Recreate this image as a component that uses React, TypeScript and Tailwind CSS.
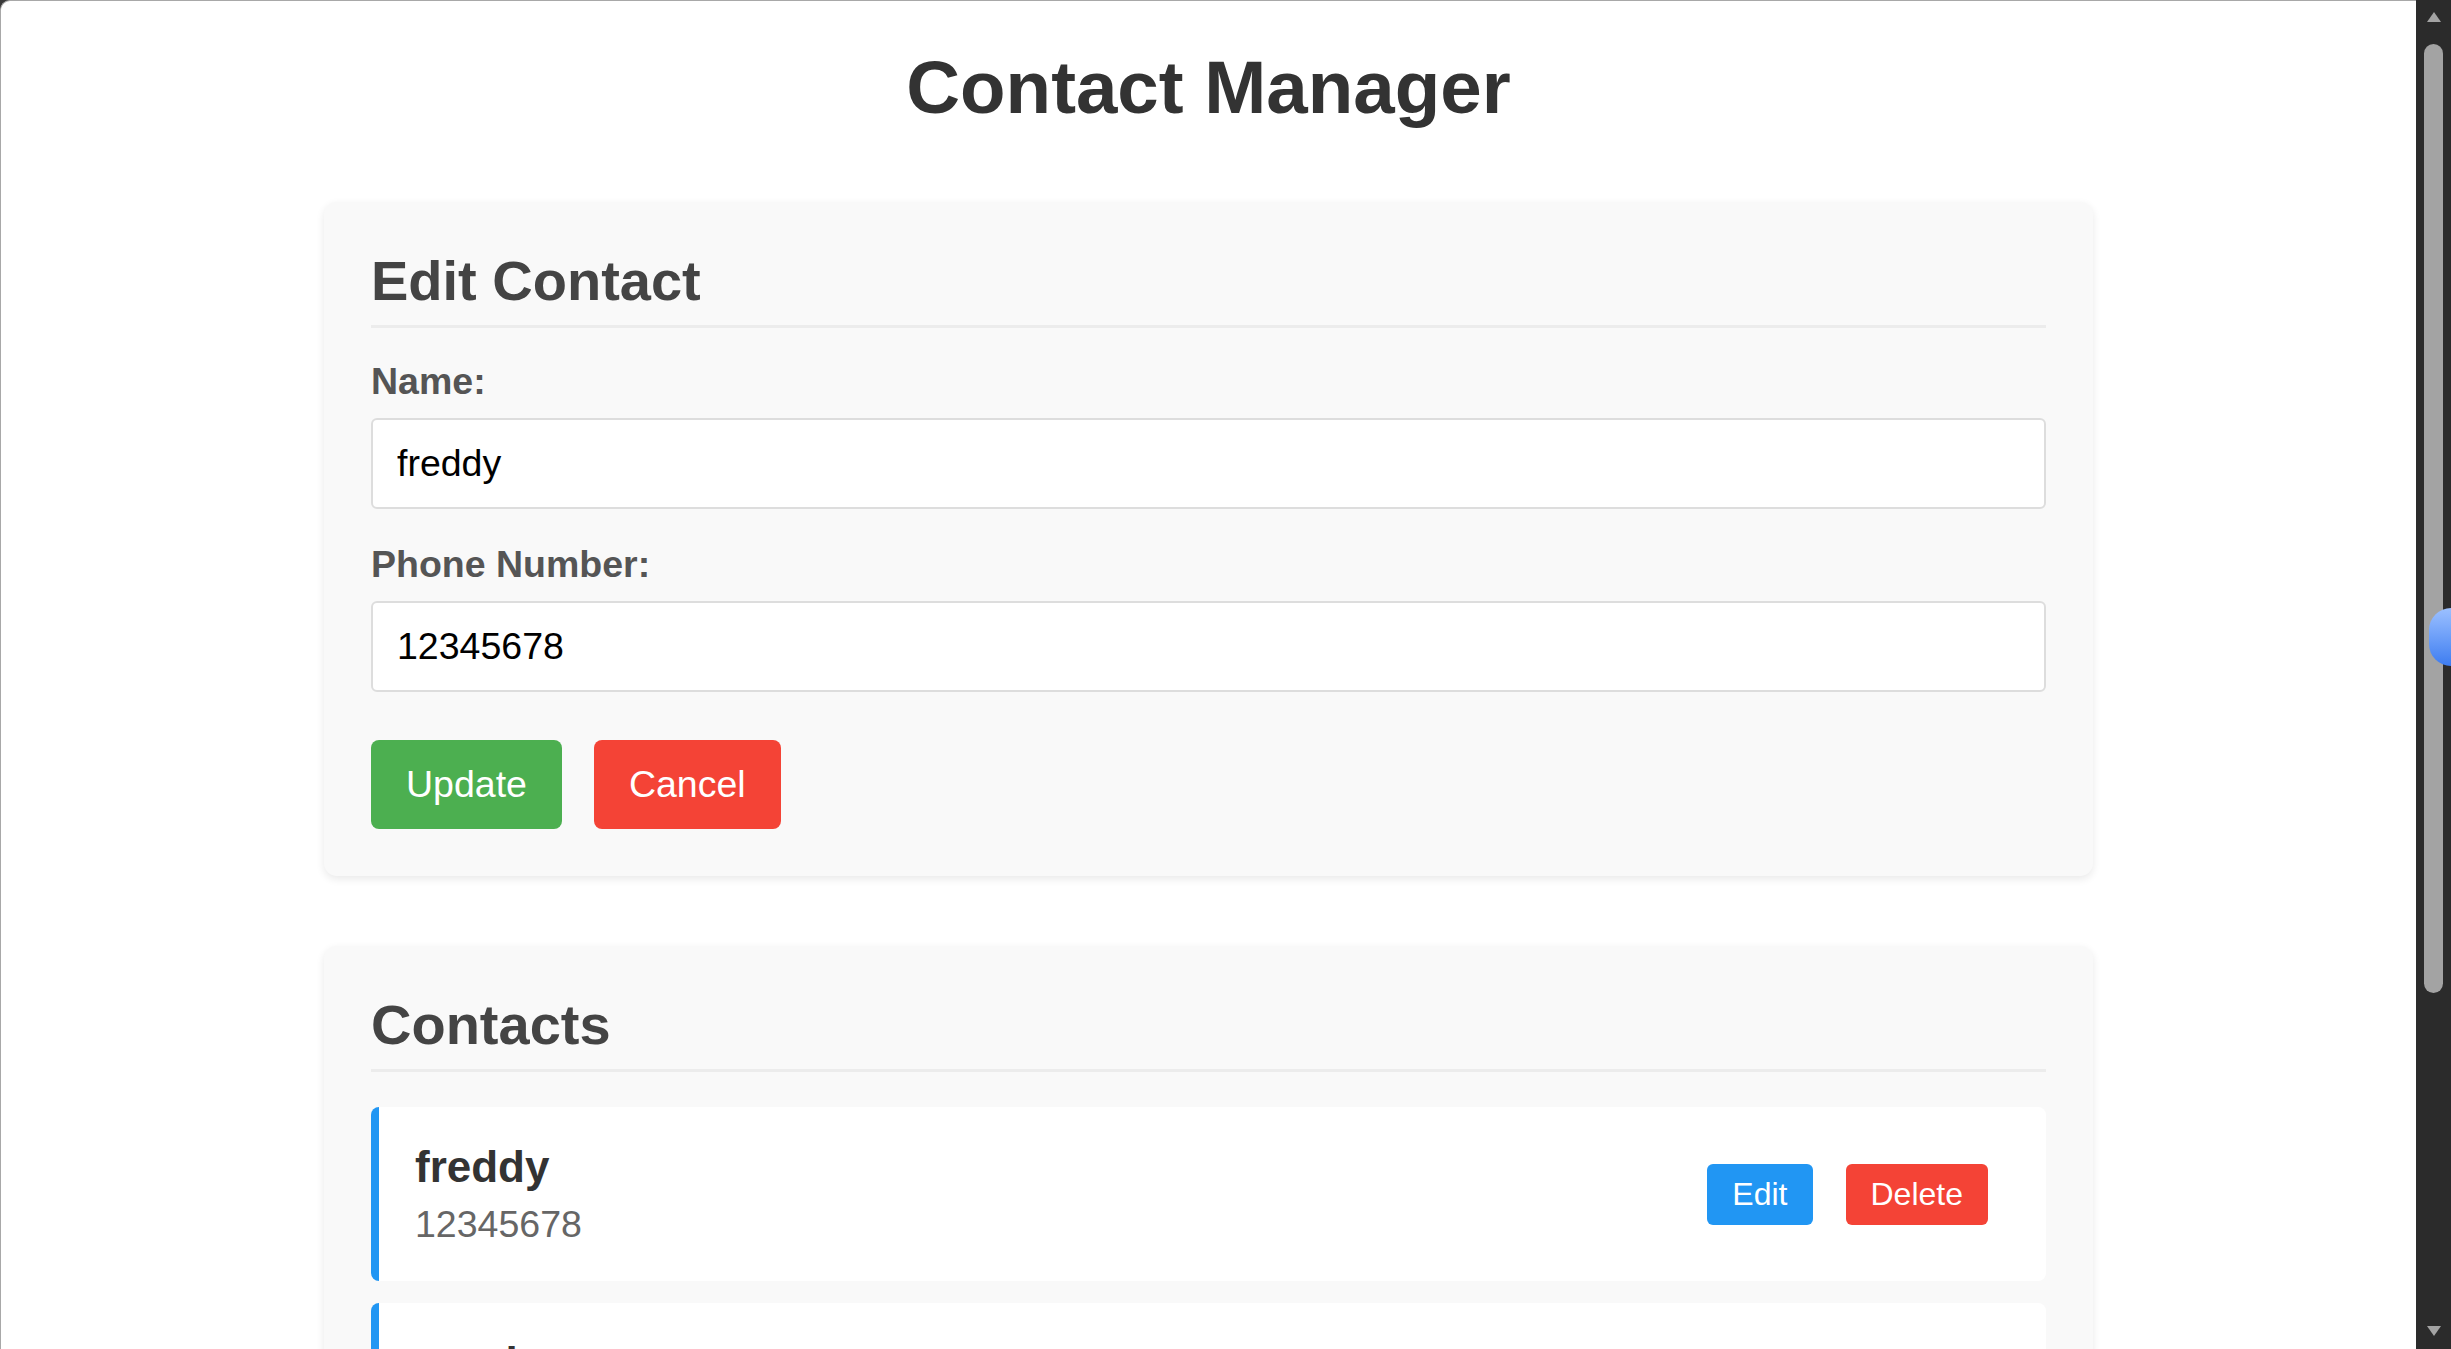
import React from 'react';

interface Contact {
    id: number;
    name: string;
    phone: string;
}

const contacts: Contact[] = [
    { id: 1, name: 'freddy', phone: '12345678' },
    { id: 2, name: 'sarah', phone: '87654321' },
];

function ContactRow({ contact }: { contact: Contact }) {
    return (
        <div className="flex items-center justify-between bg-white rounded-[8px] border-l-[8px] border-[#2196F3] py-[35px] pl-[36px] pr-[58px]">
            <div>
                <div className="text-[44px] leading-[50px] font-bold text-[#333]">{contact.name}</div>
                <div className="mt-[11px] text-[37.5px] leading-[43px] text-[#666]">{contact.phone}</div>
            </div>
            <div className="flex gap-[33px]">
                <button className="h-[61px] px-[25px] rounded-[6px] bg-[#2196F3] text-white text-[32px]">Edit</button>
                <button className="h-[61px] px-[25px] rounded-[6px] bg-[#f44336] text-white text-[32px]">Delete</button>
            </div>
        </div>
    );
}

export default function App() {
    return (
        <div className="flex h-screen overflow-hidden bg-[#3a3a3a] font-['Liberation_Sans',Arial,sans-serif]">
            <div className="flex-1 bg-white border-t border-l border-[#a8a8a8] rounded-tl-[10px] overflow-hidden">
                <h1 className="pt-[44px] text-center text-[74.5px] leading-[86px] font-bold text-[#333]">Contact Manager</h1>

                {/* edit form */}
                <div className="w-[1769px] mx-auto mt-[71px] p-[47px] bg-[#f9f9f9] rounded-[13px] shadow-[0_3px_9px_rgba(0,0,0,0.09)]">
                    <h2 className="text-[56px] leading-[64px] font-bold text-[#444] pb-[12px] border-b-[3px] border-[#ececec]">Edit Contact</h2>

                    <label className="block mt-[32px] mb-[15px] text-[37.5px] leading-[43px] font-bold text-[#555]">Name:</label>
                    <input
                        readOnly
                        value="freddy"
                        className="block w-full h-[91px] px-[24px] bg-white border-2 border-[#ddd] rounded-[6px] text-[37.5px] text-black outline-none"
                    />

                    <label className="block mt-[34px] mb-[15px] text-[37.5px] leading-[43px] font-bold text-[#555]">Phone Number:</label>
                    <input
                        readOnly
                        value="12345678"
                        className="block w-full h-[91px] px-[24px] bg-white border-2 border-[#ddd] rounded-[6px] text-[37.5px] text-black outline-none"
                    />

                    <div className="flex gap-[32px] mt-[48px]">
                        <button className="h-[89px] px-[35px] rounded-[8px] bg-[#4CAF50] text-white text-[37.5px]">Update</button>
                        <button className="h-[89px] px-[35px] rounded-[8px] bg-[#f44336] text-white text-[37.5px]">Cancel</button>
                    </div>
                </div>

                {/* contact list */}
                <div className="w-[1769px] mx-auto mt-[70px] p-[47px] bg-[#f9f9f9] rounded-[13px] shadow-[0_3px_9px_rgba(0,0,0,0.09)]">
                    <h2 className="text-[56px] leading-[64px] font-bold text-[#444] pb-[12px] border-b-[3px] border-[#ececec]">Contacts</h2>
                    <div className="flex flex-col gap-[22px] mt-[35px]">
                        {contacts.map(c => (
                            <ContactRow key={c.id} contact={c} />
                        ))}
                    </div>
                </div>
            </div>

            {/* scrollbar */}
            <div className="relative w-[35px] bg-[#2b2b2b] flex flex-col items-center">
                <svg width="16" height="12" viewBox="0 0 16 12" className="mt-[11px]">
                    <path d="M8 1 L15 11 L1 11 Z" fill="#a3a3a3" />
                </svg>
                <div className="mt-[21px] w-[19px] h-[949px] rounded-full bg-[#a3a3a3]" />
                <div className="flex-1" />
                <svg width="16" height="12" viewBox="0 0 16 12" className="mb-[12px]">
                    <path d="M1 1 L15 1 L8 11 Z" fill="#a3a3a3" />
                </svg>
                <div className="absolute right-[-22px] top-[608px] w-[44px] h-[58px] rounded-full bg-gradient-to-b from-[#9cc0ff] to-[#3d7cf0]" />
            </div>
        </div>
    );
}
